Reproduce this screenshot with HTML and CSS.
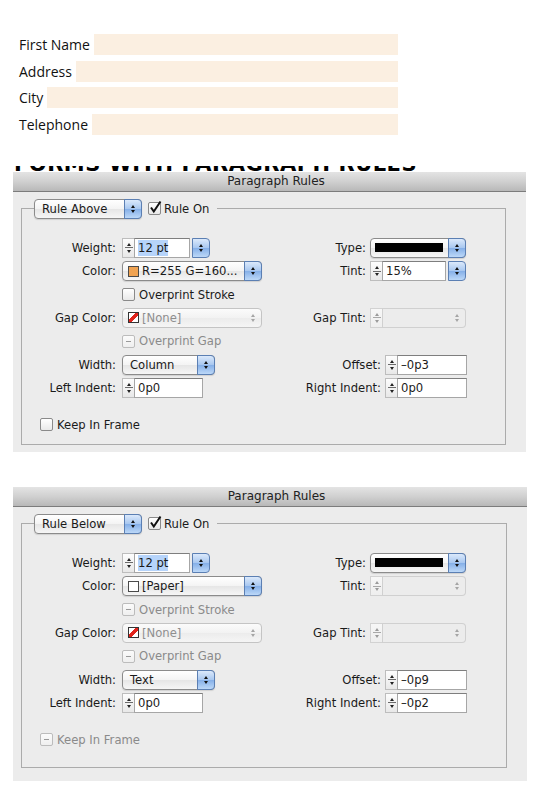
FILE: index.html
```html
<!DOCTYPE html>
<html lang="en">
<head>
<meta charset="utf-8">
<title>Paragraph Rules</title>
<link rel="stylesheet" href="styles.css">
</head>
<body>
<div class="form">
  <div class="frow"><span class="flabel">First Name</span><span class="ffield"></span></div>
  <div class="frow"><span class="flabel">Address</span><span class="ffield"></span></div>
  <div class="frow"><span class="flabel">City</span><span class="ffield"></span></div>
  <div class="frow"><span class="flabel">Telephone</span><span class="ffield"></span></div>
</div>
<div class="clip"><span class="cliptext">FORMS WITH PARAGRAPH RULES</span></div>

<section class="dialog d1">
  <div class="titlebar">Paragraph Rules</div>
  <div class="dbody">
    <fieldset class="group">
      <legend class="legend">
        <span class="legend-inner">
          <span class="popup w-rule"><span class="ptext">Rule Above</span><span class="arrows"></span></span>
          <span class="check on"><svg width="14" height="14" viewBox="0 0 14 14"><path d="M3 6.5 L5.8 10.5 L12.5 0.5" fill="none" stroke="#111" stroke-width="2"/></svg></span>
          <span class="ctext">Rule On</span>
        </span>
      </legend>
      <div class="rows">
        <div class="row">
          <span class="lbl">Weight:</span>
          <span class="combo w-weight"><span class="spin"></span><span class="input"><span class="hl">12 pt</span></span><span class="btn arrows"></span></span>
          <span class="lbl">Type:</span>
          <span class="popup w-type"><span class="stroke"></span><span class="arrows"></span></span>
        </div>
        <div class="row">
          <span class="lbl">Color:</span>
          <span class="popup w-color"><span class="sw orange"></span><span class="ptext">R=255 G=160...</span><span class="arrows"></span></span>
          <span class="lbl">Tint:</span>
          <span class="combo w-tint"><span class="spin"></span><span class="input">15%</span><span class="btn arrows"></span></span>
        </div>
        <div class="row">
          <span></span>
          <span class="cbrow"><span class="check"></span><span class="ctext">Overprint Stroke</span></span>
        </div>
        <div class="row">
          <span class="lbl">Gap Color:</span>
          <span class="popup dis w-color"><span class="sw none"></span><span class="ptext">[None]</span><span class="arrows"></span></span>
          <span class="lbl">Gap Tint:</span>
          <span class="combo dis w-tint"><span class="spin"></span><span class="input"></span><span class="btn arrows"></span></span>
        </div>
        <div class="row">
          <span></span>
          <span class="cbrow dis"><span class="check mixed"></span><span class="ctext">Overprint Gap</span></span>
        </div>
        <div class="row b">
          <span class="lbl">Width:</span>
          <span class="popup w-width"><span class="ptext">Column</span><span class="arrows"></span></span>
          <span class="lbl">Offset:</span>
          <span class="combo w-offset"><span class="spin"></span><span class="input">&#8211;0p3</span></span>
        </div>
        <div class="row b">
          <span class="lbl">Left Indent:</span>
          <span class="combo w-indent"><span class="spin"></span><span class="input">0p0</span></span>
          <span class="lbl">Right Indent:</span>
          <span class="combo w-offset"><span class="spin"></span><span class="input">0p0</span></span>
        </div>
      </div>
      <div class="keep"><span class="check"></span><span class="ctext">Keep In Frame</span></div>
    </fieldset>
  </div>
</section>

<section class="dialog d2">
  <div class="titlebar">Paragraph Rules</div>
  <div class="dbody">
    <fieldset class="group">
      <legend class="legend">
        <span class="legend-inner">
          <span class="popup w-rule"><span class="ptext">Rule Below</span><span class="arrows"></span></span>
          <span class="check on"><svg width="14" height="14" viewBox="0 0 14 14"><path d="M3 6.5 L5.8 10.5 L12.5 0.5" fill="none" stroke="#111" stroke-width="2"/></svg></span>
          <span class="ctext">Rule On</span>
        </span>
      </legend>
      <div class="rows">
        <div class="row">
          <span class="lbl">Weight:</span>
          <span class="combo w-weight"><span class="spin"></span><span class="input"><span class="hl">12 pt</span></span><span class="btn arrows"></span></span>
          <span class="lbl">Type:</span>
          <span class="popup w-type"><span class="stroke"></span><span class="arrows"></span></span>
        </div>
        <div class="row">
          <span class="lbl">Color:</span>
          <span class="popup w-color"><span class="sw paper"></span><span class="ptext">[Paper]</span><span class="arrows"></span></span>
          <span class="lbl">Tint:</span>
          <span class="combo dis w-tint"><span class="spin"></span><span class="input"></span><span class="btn arrows"></span></span>
        </div>
        <div class="row">
          <span></span>
          <span class="cbrow dis"><span class="check mixed"></span><span class="ctext">Overprint Stroke</span></span>
        </div>
        <div class="row">
          <span class="lbl">Gap Color:</span>
          <span class="popup dis w-color"><span class="sw none"></span><span class="ptext">[None]</span><span class="arrows"></span></span>
          <span class="lbl">Gap Tint:</span>
          <span class="combo dis w-tint"><span class="spin"></span><span class="input"></span><span class="btn arrows"></span></span>
        </div>
        <div class="row">
          <span></span>
          <span class="cbrow dis"><span class="check mixed"></span><span class="ctext">Overprint Gap</span></span>
        </div>
        <div class="row b">
          <span class="lbl">Width:</span>
          <span class="popup w-width"><span class="ptext">Text</span><span class="arrows"></span></span>
          <span class="lbl">Offset:</span>
          <span class="combo w-offset"><span class="spin"></span><span class="input">&#8211;0p9</span></span>
        </div>
        <div class="row b">
          <span class="lbl">Left Indent:</span>
          <span class="combo w-indent"><span class="spin"></span><span class="input">0p0</span></span>
          <span class="lbl">Right Indent:</span>
          <span class="combo w-offset"><span class="spin"></span><span class="input">&#8211;0p2</span></span>
        </div>
      </div>
      <div class="keep dis"><span class="check mixed"></span><span class="ctext">Keep In Frame</span></div>
    </fieldset>
  </div>
</section>
</body>
</html>
```
FILE: styles.css
```css
* { box-sizing: border-box; }
html, body { margin: 0; background: #fff; }
body {
  width: 546px;
  height: 796px;
  overflow: hidden;
  font-family: "DejaVu Sans", sans-serif;
  font-size: 11.6px;
  color: #1a1a1a;
}

/* top form */
.form {
  width: 398px;
  padding: 34px 0 0 19px;
  display: flex;
  flex-direction: column;
  gap: 5.67px;
  font-family: "Open Sans", sans-serif;
  font-size: 14px;
  color: #111;
}
.frow { display: flex; align-items: center; height: 21px; gap: 4px; }
.flabel { background: #fff; line-height: 21px; white-space: nowrap; }
.ffield { flex: 1; align-self: stretch; background: #fbefe1; }

.clip {
  margin: 31px 0 0 14px;
  width: 470px;
  height: 6px;
  overflow: hidden;
}
.cliptext {
  display: block;
  font: bold 21px/6px "DejaVu Sans", sans-serif;
  margin-top: -5px;
  white-space: nowrap;
  color: #000;
  letter-spacing: 0.5px;
}

/* dialog */
.dialog { margin-left: 13px; width: 513px; background: #ececec; }
.d2 { margin-top: 35px; width: 514px; }
.titlebar {
  height: 20px;
  padding-left: 13px;
  background: linear-gradient(#e4e4e4, #d0d0d0 50%, #b8b8b8);
  border-bottom: 1px solid #7c7c7c;
  font-size: 12px;
  line-height: 19px;
  text-align: center;
  color: #222;
}
.dbody { padding: 7px 20px 7px 8px; }
.d2 .dbody { padding-bottom: 13px; }

.group {
  margin: 0;
  padding: 0 0 9px 0;
  min-width: 0;
  border: 1px solid #ababab;
}
.d2 .group { padding-bottom: 17px; }
.legend { margin-left: 12px; padding: 0 8px 0 0; height: 20px; }
.legend-inner { display: flex; align-items: center; height: 20px; }
.legend-inner .check { margin-left: 6px; }

.rows { margin-top: 19px; display: flex; flex-direction: column; gap: 3.33px; }
.row {
  display: grid;
  grid-template-columns: 100px 140px 108px 96px;
  height: 20px;
  align-items: center;
}
.row.b { grid-template-columns: 100px 140px 123px 82px; }
.lbl { text-align: right; padding-right: 6px; white-space: nowrap; }
.row .lbl:nth-child(3) { padding-right: 4px; }

.keep { margin-top: 17px; padding-left: 18px; height: 20px; display: flex; align-items: center; }

/* popup buttons */
.popup {
  display: flex;
  align-items: center;
  height: 20px;
  border: 1px solid #8b8b8b;
  border-radius: 4px;
  background: linear-gradient(#ffffff, #f4f4f4 48%, #e6e6e6 52%, #f6f6f6);
  box-shadow: 0 1px 1px rgba(0,0,0,0.12);
  white-space: nowrap;
  justify-self: start;
}
.ptext { padding-left: 7px; }
.popup .arrows {
  margin: -1px -1px -1px auto;
  align-self: stretch;
  width: 18px;
  border: 1px solid #5b7fb3;
  border-radius: 0 4px 4px 0;
  background: linear-gradient(#dbe9fb, #a9c8f0 48%, #86b0e8 52%, #bcd8f8);
}
.arrows {
  display: flex;
  flex-direction: column;
  align-items: center;
  justify-content: center;
  gap: 2px;
}
.arrows::before {
  content: "";
  border-left: 2.5px solid transparent;
  border-right: 2.5px solid transparent;
  border-bottom: 3.5px solid #111;
}
.arrows::after {
  content: "";
  border-left: 2.5px solid transparent;
  border-right: 2.5px solid transparent;
  border-top: 3.5px solid #111;
}

.w-rule { width: 108px; }
.w-type { width: 96px; }
.w-color { width: 140px; }
.w-width { width: 93px; }

.stroke { flex: 1; height: 9px; background: #000; margin: 0 5px 0 4px; }

.sw { width: 11px; height: 11px; border: 1px solid #4a4a4a; margin-left: 5px; flex: none; }
.sw + .ptext { padding-left: 3px; }
.sw.orange { background: #f0a352; }
.sw.paper { background: #fff; }
.sw.none {
  border-color: #333;
  background: linear-gradient(to bottom right, #fff 38%, #e0231b 38%, #e0231b 62%, #fff 62%);
}

/* disabled popup */
.popup.dis {
  border-color: #c4c4c4;
  background: linear-gradient(#fbfbfb, #f2f2f2 50%, #ececec 52%, #f5f5f5);
  box-shadow: none;
  color: #8e8e8e;
}
.popup.dis .arrows, .combo.dis .btn {
  background: transparent;
  border-color: transparent;
}
.dis .arrows::before { border-bottom-color: #a5a5a5; }
.dis .arrows::after { border-top-color: #a5a5a5; }

/* combos: spinner + field (+ button) */
.combo { display: flex; height: 20px; justify-self: start; }
.w-weight { width: 88px; }
.w-tint { width: 96px; }
.w-offset { width: 82px; }
.w-indent { width: 81px; }
.spin {
  width: 13px;
  flex: none;
  border: 1px solid #bdbdbd;
  background:
    linear-gradient(#6a6a6a, #6a6a6a) center / 8px 1px no-repeat,
    linear-gradient(#fdfdfd, #e8e8e8);
  display: flex;
  flex-direction: column;
  align-items: center;
  justify-content: center;
  gap: 4px;
}
.spin::before {
  content: "";
  border-left: 2.5px solid transparent;
  border-right: 2.5px solid transparent;
  border-bottom: 3.5px solid #222;
}
.spin::after {
  content: "";
  border-left: 2.5px solid transparent;
  border-right: 2.5px solid transparent;
  border-top: 3.5px solid #222;
}
.input {
  flex: 1;
  margin-left: -1px;
  border: 1px solid #a6a6a6;
  border-top-color: #7e7e7e;
  background: #fff;
  padding-left: 3px;
  line-height: 18px;
  white-space: nowrap;
}
.hl { background: #b6d4fb; padding: 1px 0; }
.combo .btn {
  width: 18px;
  flex: none;
  margin-left: 2px;
  border: 1px solid #5b7fb3;
  border-radius: 0 4px 4px 0;
  background: linear-gradient(#dbe9fb, #a9c8f0 48%, #86b0e8 52%, #bcd8f8);
}
.combo.dis .spin {
  border-color: #d2d2d2;
  background:
    linear-gradient(#a8a8a8, #a8a8a8) center / 8px 1px no-repeat,
    linear-gradient(#f7f7f7, #eeeeee);
}
.combo.dis .spin::before { border-bottom-color: #9a9a9a; }
.combo.dis .spin::after { border-top-color: #9a9a9a; }
.combo.dis .input {
  background: #ececec;
  border-color: #d0d0d0;
  border-right: none;
}
.combo.dis .btn {
  margin-left: 0;
  border: 1px solid #d0d0d0;
  border-left: none;
  border-radius: 0 4px 4px 0;
  background: #ececec;
}

/* checkboxes */
.cbrow { display: flex; align-items: center; }
.check {
  position: relative;
  width: 13px;
  height: 13px;
  flex: none;
  border: 1px solid #8a8a8a;
  border-radius: 2px;
  background: linear-gradient(#ffffff, #e9e9e9);
}
.check svg { position: absolute; left: -1px; top: -2px; overflow: visible; }
.check.mixed { border-color: #bcbcbc; background: linear-gradient(#fbfbfb, #efefef); }
.check.mixed::after {
  content: "";
  position: absolute;
  left: 3px;
  top: 5px;
  width: 5px;
  height: 1px;
  background: #9a9a9a;
}
.ctext { margin-left: 4px; white-space: nowrap; }
.legend-inner .ctext { margin-left: 3px; }
.dis .ctext { color: #8a8a8a; }
.keep .ctext { margin-left: 4px; }
```
